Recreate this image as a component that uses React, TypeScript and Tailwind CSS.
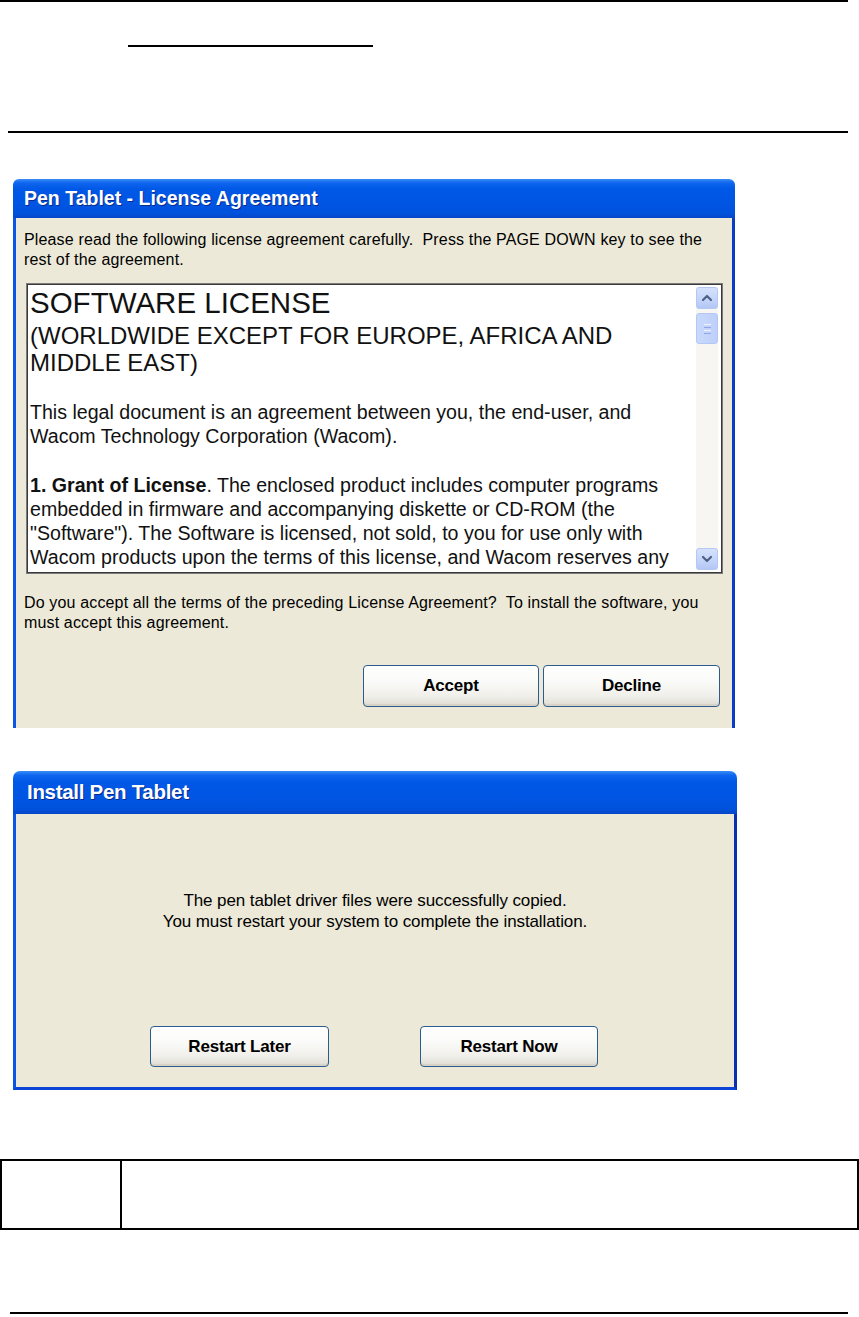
import React from 'react';

const titleBar =
  "bg-[linear-gradient(to_bottom,#3A8CF7_0%,#0F66EE_10%,#0058E6_25%,#0055E3_60%,#0052DC_88%,#0846C9_100%)]";

function XpButton({ label, className }: { label: string; className: string }) {
  return (
    <div
      className={`flex items-center justify-center rounded-[4px] border border-[#2B5C8F] bg-[linear-gradient(to_bottom,#FFFFFF_0%,#FAFAF8_40%,#F0EFEA_75%,#DEDBD2_100%)] text-[17px] font-bold tracking-[-0.2px] text-black shadow-[inset_0_-2px_0_#D8D3C6] ${className}`}
    >
      {label}
    </div>
  );
}

function ScrollArrow({ up }: { up: boolean }) {
  return (
    <div className="flex h-[22px] w-[22px] items-center justify-center rounded-[3px] border border-[#B4C8F4] bg-[linear-gradient(to_bottom,#D5E1FC_0%,#C3D4FA_60%,#B3C6F4_100%)]">
      <svg width="14" height="14" viewBox="0 0 14 14">
        <polyline
          points={up ? "3,9 7,5 11,9" : "3,5 7,9 11,5"}
          fill="none"
          stroke="#4D6185"
          strokeWidth="2.2"
          strokeLinecap="round"
          strokeLinejoin="round"
        />
      </svg>
    </div>
  );
}

function Scrollbar() {
  return (
    <div className="my-[2px] mr-[3px] flex w-[22px] flex-col bg-[#F7F6F2]">
      <ScrollArrow up />
      <div className="mt-[4px] flex h-[31px] w-[22px] flex-col items-center justify-center gap-[2px] rounded-[3px] border border-[#B4C8F4] bg-[linear-gradient(to_right,#C9D8FC_0%,#BED0FA_100%)]">
        <div className="h-px w-[7px] bg-[#EEF3FE]" />
        <div className="h-px w-[7px] bg-[#8FA8E4]" />
        <div className="h-px w-[7px] bg-[#EEF3FE]" />
        <div className="h-px w-[7px] bg-[#8FA8E4]" />
      </div>
      <div className="flex-1" />
      <ScrollArrow up={false} />
    </div>
  );
}

function LicenseDialog() {
  return (
    <div className="ml-[13px] mt-[46px] flex h-[549px] w-[722px] flex-col">
      <div className={`flex h-[39px] items-center rounded-t-[6px] pl-[11px] ${titleBar}`}>
        <span className="text-[19.5px] font-bold text-white [text-shadow:1px_1px_0_#0A2A8C]">
          Pen Tablet - License Agreement
        </span>
      </div>
      <div className="flex flex-1 flex-col border-l-[3px] border-r-[3px] border-l-[#0A55E6] border-r-[#0A3CC4] bg-[#ECE9D8] pl-[8px] pr-[9px] pt-[12px] text-[16px] leading-[20px] tracking-[0.15px] text-black">
        <div className="whitespace-pre">
          {"Please read the following license agreement carefully.  Press the PAGE DOWN key to see the"}
        </div>
        <div className="whitespace-pre">rest of the agreement.</div>

        <div className="ml-[2px] mt-[13px] flex h-[291px] w-[697px] border border-[#7A7A7A] bg-white tracking-normal">
          <div className="flex flex-1 border border-[#3A3A3A]">
            <div className="flex-1 overflow-hidden pl-[2px] pt-[1px] text-[#111]">
              <div className="whitespace-nowrap text-[29.5px] leading-[34px]">SOFTWARE LICENSE</div>
              <div className="mt-[2px] whitespace-nowrap text-[24px] leading-[27px]">
                (WORLDWIDE EXCEPT FOR EUROPE, AFRICA AND
                <br />
                MIDDLE EAST)
              </div>
              <div className="mt-[24px] whitespace-nowrap text-[19.6px] leading-[24px]">
                This legal document is an agreement between you, the end-user, and
                <br />
                Wacom Technology Corporation (Wacom).
              </div>
              <div className="mt-[25px] whitespace-nowrap text-[19.6px] leading-[24px]">
                <b>1. Grant of License</b>. The enclosed product includes computer programs
                <br />
                embedded in firmware and accompanying diskette or CD-ROM (the
                <br />
                "Software"). The Software is licensed, not sold, to you for use only with
                <br />
                Wacom products upon the terms of this license, and Wacom reserves any
              </div>
            </div>
            <Scrollbar />
          </div>
        </div>

        <div className="mt-[19px] whitespace-pre">
          {"Do you accept all the terms of the preceding License Agreement?  To install the software, you"}
        </div>
        <div>must accept this agreement.</div>

        <div className="mt-[32px] flex justify-end gap-[4px] pr-[3px] tracking-normal">
          <XpButton label="Accept" className="h-[42px] w-[176px]" />
          <XpButton label="Decline" className="h-[42px] w-[177px]" />
        </div>
      </div>
    </div>
  );
}

function InstallDialog() {
  return (
    <div className="ml-[13px] mt-[43px] flex h-[319px] w-[724px] flex-col">
      <div className={`flex h-[43px] items-center rounded-t-[7px] pl-[14px] ${titleBar}`}>
        <span className="text-[20.5px] font-bold tracking-[-0.3px] text-white [text-shadow:1px_1px_0_#0A2A8C]">
          Install Pen Tablet
        </span>
      </div>
      <div className="flex flex-1 flex-col border-b-[3px] border-l-[3px] border-r-[3px] border-b-[#0A45D5] border-l-[#0A55E6] border-r-[#0A30B0] bg-[#ECE9D8]">
        <div className="pt-[76px] text-center text-[17px] leading-[21px] tracking-[-0.1px] text-black">
          The pen tablet driver files were successfully copied.
          <br />
          You must restart your system to complete the installation.
        </div>
        <div className="ml-[134px] mt-[94px] flex gap-[91px]">
          <XpButton label="Restart Later" className="h-[41px] w-[179px]" />
          <XpButton label="Restart Now" className="h-[41px] w-[178px]" />
        </div>
      </div>
    </div>
  );
}

export default function App() {
  return (
    <div className="h-[1317px] w-[859px] overflow-hidden bg-white font-['Liberation_Sans',Arial,sans-serif]">
      <div className="h-[2px] w-[848px] bg-black" />
      <div className="ml-[128px] mt-[43px] h-[2px] w-[245px] bg-black" />
      <div className="ml-[8px] mt-[84px] h-[2px] w-[840px] bg-black" />

      <LicenseDialog />
      <InstallDialog />

      <div className="mt-[69px] grid h-[71px] w-[859px] grid-cols-[120px_1fr] border-2 border-black">
        <div className="border-r-2 border-black" />
        <div />
      </div>

      <div className="ml-[10px] mt-[82px] h-[2px] w-[838px] bg-black" />
    </div>
  );
}
